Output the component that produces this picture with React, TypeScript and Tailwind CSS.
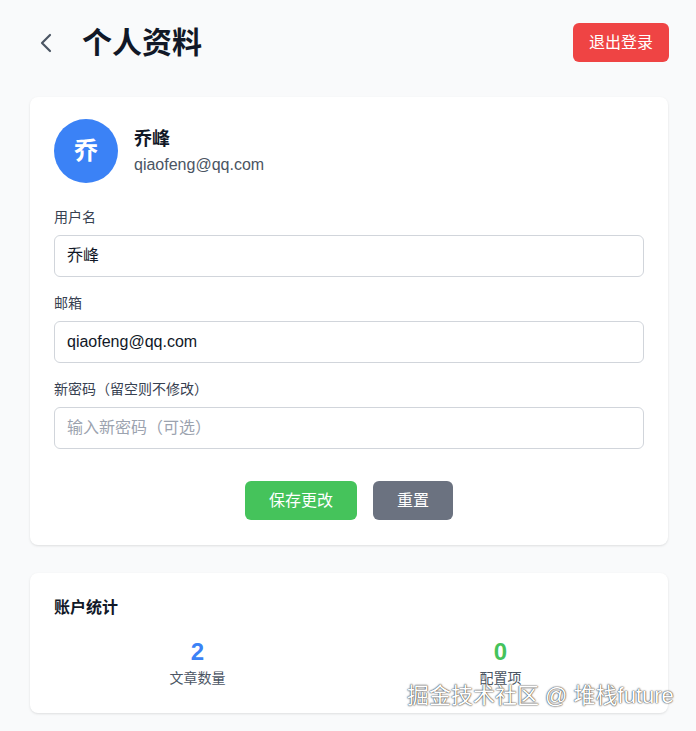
import React from "react";

export default function App() {
  const font = {
    fontFamily: '"Liberation Sans", "Noto Sans CJK SC", sans-serif',
  };
  return (
    <div
      className="relative min-h-screen bg-[#f9fafb] pl-[30px] pr-[28px] pt-[23px] pb-6"
      style={font}
    >
      {/* Header */}
      <div className="flex h-[39px] items-center justify-between">
        <div className="flex items-center">
          <svg
            width="32"
            height="32"
            viewBox="0 0 24 24"
            fill="none"
            stroke="#4b5563"
            strokeWidth="1.6"
            strokeLinecap="round"
            strokeLinejoin="round"
          >
            <path d="m15 18-6-6 6-6" />
          </svg>
          <h1 className="ml-5 text-[30px] font-bold leading-9 text-[#111827]">个人资料</h1>
        </div>
        <button className="mr-[-1px] h-[39px] rounded-md bg-[#ef4444] px-4 text-base text-white">
          退出登录
        </button>
      </div>

      {/* Profile card */}
      <div className="mt-[35px] rounded-lg bg-white px-6 pt-[22px] pb-[25px] shadow-[0_1px_3px_rgba(0,0,0,0.08),0_1px_2px_rgba(0,0,0,0.04)]">
        <div className="flex items-center gap-4">
          <div className="flex h-16 w-16 items-center justify-center rounded-full bg-[#3b82f6] text-2xl font-bold text-white">
            乔
          </div>
          <div className="flex flex-col">
            <div className="text-lg font-bold leading-7 text-[#111827]">乔峰</div>
            <div className="text-base leading-6 text-[#4b5563]">qiaofeng@qq.com</div>
          </div>
        </div>

        <div className="mt-6 flex flex-col gap-4">
          <div>
            <label className="mb-2 block text-sm leading-5 text-[#374151]">用户名</label>
            <div className="flex h-[42px] items-center rounded-md border border-[#d1d5db] px-3 text-base text-[#111827]">
              乔峰
            </div>
          </div>
          <div>
            <label className="mb-2 block text-sm leading-5 text-[#374151]">邮箱</label>
            <div className="flex h-[42px] items-center rounded-md border border-[#d1d5db] px-3 text-base text-[#111827]">
              qiaofeng@qq.com
            </div>
          </div>
          <div>
            <label className="mb-2 block text-sm leading-5 text-[#374151]">新密码（留空则不修改）</label>
            <div className="flex h-[42px] items-center rounded-md border border-[#d1d5db] px-3 text-base text-[#9ca3af]">
              输入新密码（可选）
            </div>
          </div>
        </div>

        <div className="mt-8 flex justify-center gap-4">
          <button className="h-[39px] rounded-md bg-[#45c35b] px-6 text-base text-white">保存更改</button>
          <button className="h-[39px] rounded-md bg-[#6b7280] px-6 text-base text-white">重置</button>
        </div>
      </div>

      {/* Stats card */}
      <div className="mt-7 rounded-lg bg-white px-6 pt-[23px] pb-[25px] shadow-[0_1px_3px_rgba(0,0,0,0.08),0_1px_2px_rgba(0,0,0,0.04)]">
        <h2 className="text-base font-bold leading-6 text-[#111827]">账户统计</h2>
        <div className="mt-4 grid grid-cols-2 gap-4">
          <div className="flex flex-col items-center">
            <div className="text-2xl font-bold leading-8 text-[#3b82f6]">2</div>
            <div className="text-sm leading-5 text-[#4b5563]">文章数量</div>
          </div>
          <div className="flex flex-col items-center">
            <div className="text-2xl font-bold leading-8 text-[#45c35b]">0</div>
            <div className="text-sm leading-5 text-[#4b5563]">配置项</div>
          </div>
        </div>
      </div>

      {/* Watermark */}
      <div className="absolute left-[407px] top-[682px] text-[22px] leading-7 text-white [text-shadow:0_0_2px_rgba(0,0,0,0.7),0_0_1px_rgba(0,0,0,0.8)]">
        掘金技术社区 @ 堆栈future
      </div>
    </div>
  );
}
